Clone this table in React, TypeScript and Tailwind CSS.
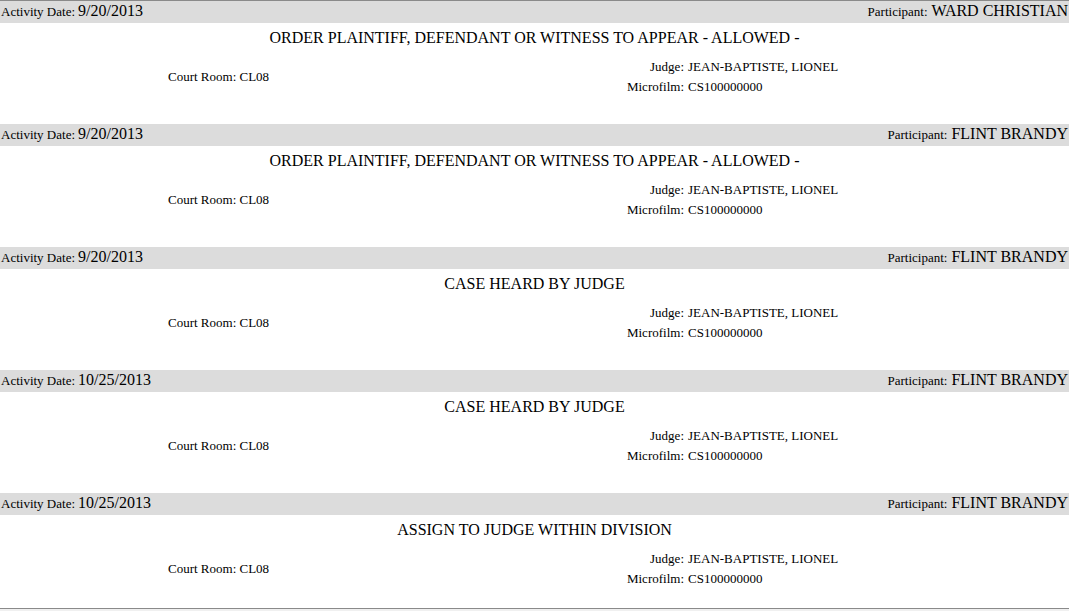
const RECORDS = [
  {
    date: "9/20/2013",
    participant: "WARD CHRISTIAN",
    title: "ORDER PLAINTIFF, DEFENDANT OR WITNESS TO APPEAR - ALLOWED -",
  },
  {
    date: "9/20/2013",
    participant: "FLINT BRANDY",
    title: "ORDER PLAINTIFF, DEFENDANT OR WITNESS TO APPEAR - ALLOWED -",
  },
  { date: "9/20/2013", participant: "FLINT BRANDY", title: "CASE HEARD BY JUDGE" },
  { date: "10/25/2013", participant: "FLINT BRANDY", title: "CASE HEARD BY JUDGE" },
  { date: "10/25/2013", participant: "FLINT BRANDY", title: "ASSIGN TO JUDGE WITHIN DIVISION" },
];

type Record = (typeof RECORDS)[number];

const Activity = ({ record, last }: { record: Record; last: boolean }) => (
  <div className={last ? "pb-[19px]" : "pb-[27px]"}>
    <div className="flex h-[22px] items-center justify-between bg-[#dcdcdc] px-px pb-[2px]">
      <div className="flex items-baseline">
        <span className="text-[13px]">Activity Date:</span>
        <span className="ml-[3px] text-[16px]">{record.date}</span>
      </div>
      <div className="flex items-baseline">
        <span className="text-[13px]">Participant:</span>
        <span className="ml-1 text-[16px]">{record.participant}</span>
      </div>
    </div>
    <h2 className="mt-[6px] text-center text-[16px] leading-[18px]">{record.title}</h2>
    <div className="mt-[10px] flex items-center text-[13px] leading-[20px]">
      <div className="w-[168px] shrink-0" />
      <div className="w-[280px] shrink-0">Court Room: CL08</div>
      <div className="w-[236px] shrink-0 text-right">
        <div>Judge:</div>
        <div>Microfilm:</div>
      </div>
      <div className="pl-1">
        <div>JEAN-BAPTISTE, LIONEL</div>
        <div>CS100000000</div>
      </div>
    </div>
  </div>
);

export default function App() {
  return (
    <div className="min-h-[611px] bg-[#f0f0f0] font-['Liberation_Serif',serif] text-black">
      <div className="border-t border-b border-t-[#8a8a8a] border-b-[#8a8a8a] bg-white">
        {RECORDS.map((record, i) => (
          <Activity key={i} record={record} last={i === RECORDS.length - 1} />
        ))}
      </div>
    </div>
  );
}
